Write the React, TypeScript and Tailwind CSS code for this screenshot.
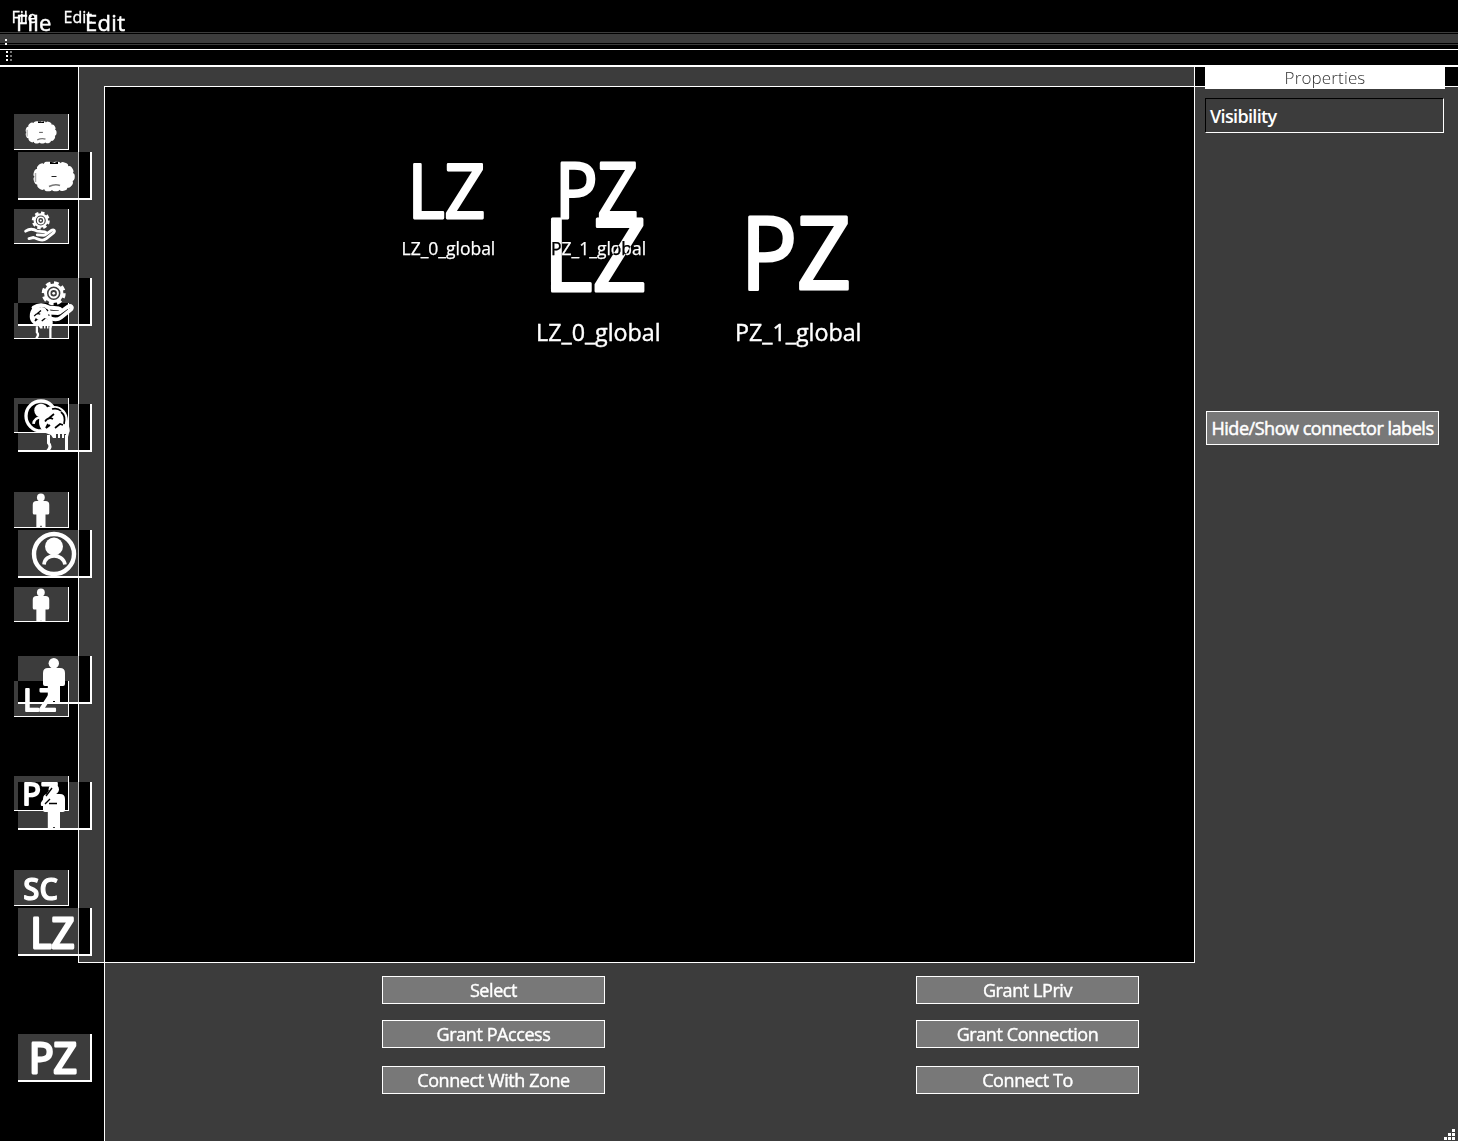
import React from "react";

type Box = { x: number; y: number; w: number; h: number };

const METRICS: Record<string, { visible: number; left: number }> = {
  LZ: { visible: 0.87, left: 0.09 },
  PZ: { visible: 0.88, left: 0.083 },
  SC: { visible: 0.93, left: 0.04 },
};

function Initials({ text, box, stroke, weight = 400 }: { text: string; box: Box; stroke: number; weight?: number }) {
  const m = METRICS[text];
  const advance = (box.w - stroke) / m.visible;
  return (
    <text
      x={box.x + stroke / 2 - m.left * advance}
      y={box.y + box.h - stroke / 2}
      textLength={advance}
      lengthAdjust="spacingAndGlyphs"
      fontFamily="Open Sans, sans-serif"
      fontWeight={weight}
      fontSize={(box.h - stroke) / 0.714}
      fill="white"
      stroke="white"
      strokeWidth={stroke}
      strokeLinejoin="round"
    >
      {text}
    </text>
  );
}

function Glyph({ kind }: { kind: string }) {
  switch (kind) {
    case "cloud":
      return (
        <g>
          <rect x="4.500" y="11.500" width="39" height="26" rx="13" fill="white" />
          <rect x="6" y="12.500" width="36" height="24" rx="12" fill="none" stroke="white" strokeWidth="5.500" strokeLinecap="round" strokeDasharray="2.500 5" />
          <path d="M20 9.500l4 1.500 4-1.500v2.500h-8z" fill="black" />
          <path d="M21.500 24.500h5" stroke="#222" strokeWidth="1" />
          <path d="M19 34.500q6-3 11-1" fill="none" stroke="#777" strokeWidth="1.6" />
          <path d="M5.500 21v9" stroke="#aaa" strokeWidth="1.5" />
        </g>
      );
    case "service":
      return (
        <g fill="none" stroke="white">
          <circle cx="23.700" cy="15.300" r="8.200" strokeWidth="3" />
          <circle cx="23.700" cy="15.300" r="10.200" strokeWidth="3.600" strokeDasharray="4.600 3.411" />
          <circle cx="23.700" cy="15.300" r="4.200" strokeWidth="2" />
          <circle cx="23.700" cy="15.300" r="1.400" fill="white" strokeWidth="0" />
          <path
            d="M3.500 29.500C8 26.500 14 26.500 19 29.500L29 30.500C32 31 31 35 28 35L19 34.500M31 33.500L38 28.500C41 27 43 29 41 31.500L31 39.500C28 42 25 42 21 40.500L14 38L8 39.500"
            strokeWidth="3.800"
            strokeLinecap="round"
            strokeLinejoin="round"
          />
        </g>
      );
    case "head":
      return (
        <g>
          <path d="M18.500 31v8c2 2 2 5-1 8M36.500 31v16" fill="none" stroke="white" strokeWidth="3" />
          <path d="M9 18C9 8 15 2 24 2s14 7 14 15c0 4 3 9 1 12l-1 4h-2v-3h-2v4h-2v-4h-2v4h-2v-4h-2v4h-3l-2-3C13 29 9 24 9 18z" fill="white" />
          <path d="M15 17.500c2-3 5-4 8-2.500M18 20l-2 4 4-3M24 10l-6 5M25 24l5-4 3 1M31 8c4 3 4 8 3 12M22 5c4-1 7 0 9 2" fill="none" stroke="black" strokeWidth="1.700" />
        </g>
      );
    case "account":
      return (
        <g>
          <circle cx="24" cy="24" r="20" fill="none" stroke="white" strokeWidth="4.400" />
          <circle cx="24" cy="16.500" r="9" fill="white" />
          <path d="M14 34.500c1-11.500 19-11.500 21 0" fill="none" stroke="white" strokeWidth="3.600" />
        </g>
      );
    case "person":
      return (
        <g fill="white">
          <circle cx="23.800" cy="7.200" r="5.200" />
          <path d="M18 12h12q5 0 5 5v11q0 2-2 2h-3v16.500h-5v-1.500h-2V46.500h-5.200V30H15q-2 0-2-2V17q0-5 5-5z" />
        </g>
      );
    case "LZ":
      return <Initials text="LZ" box={{ x: 3, y: 8, w: 41, h: 33 }} stroke={2.8} weight={500} />;
    case "PZ":
      return <Initials text="PZ" box={{ x: 1.500, y: 7, w: 45, h: 33 }} stroke={2.8} weight={500} />;
    default:
      return <Initials text="SC" box={{ x: 1.500, y: 11, w: 44.500, h: 30 }} stroke={1.6} weight={600} />;
  }
}

const SMALL_TOOLS = ["cloud", "service", "head", "account", "person", "person", "LZ", "PZ", "SC"];
const LARGE_TOOLS = ["cloud", "service", "head", "account", "person", "person", "LZ", "PZ"];

function ToolColumns() {
  return (
    <>
      <div className="absolute left-[14px] top-[114.300px] flex flex-col gap-[59px]">
        {SMALL_TOOLS.map((t, i) => (
          <div key={i} className="h-[35.500px] w-[55px] bg-[#3c3c3c] mix-blend-difference" />
        ))}
      </div>
      <div className="absolute left-[18px] top-[152px] flex flex-col gap-[78px]">
        {LARGE_TOOLS.map((t, i) => (
          <div key={i} className="h-[48px] w-[74px] bg-[#3c3c3c] mix-blend-difference" />
        ))}
      </div>
      <div className="absolute left-[14px] top-[114.300px] flex flex-col gap-[59px]">
        {SMALL_TOOLS.map((t, i) => (
          <div key={i} className="h-[35.500px] w-[55px] border-b border-r border-white pl-[8.500px]">
            <svg viewBox="0 0 48 48" className="block size-9 overflow-visible">
              <Glyph kind={t} />
            </svg>
          </div>
        ))}
      </div>
      <div className="absolute left-[18px] top-[152px] flex flex-col gap-[78px]">
        {LARGE_TOOLS.map((t, i) => (
          <div key={i} className="h-[48px] w-[74px] border-b-2 border-r-2 border-white pl-3">
            <svg viewBox="0 0 48 48" className="block size-12 overflow-visible">
              <Glyph kind={t} />
              {i === 5 && <path d="M22 6L16 14M20 17l-5 5M19 21.500h8" stroke="black" strokeWidth="1.400" fill="none" />}
            </svg>
          </div>
        ))}
      </div>
    </>
  );
}

function Header() {
  return (
    <header className="flex h-[67px] flex-col border-b-2 border-white bg-black">
      <div className="relative h-8">
        <span className="absolute left-[11.500px] top-[5px] text-[16px] leading-6 [-webkit-text-stroke:0.3px_white]">File</span>
        <span className="absolute left-[63.500px] top-[5px] text-[16px] leading-6 [-webkit-text-stroke:0.3px_white]">Edit</span>
        <span className="absolute left-[16px] top-[7px] text-[22px] leading-[30px] tracking-[0.2px] [-webkit-text-stroke:0.5px_white]">File</span>
        <span className="absolute left-[85px] top-[7px] text-[22px] leading-[30px] tracking-[0.3px] [-webkit-text-stroke:0.5px_white]">Edit</span>
      </div>
      <div className="h-px bg-[#3c3c3c]" />
      <div className="mt-px flex h-[9px] flex-col gap-[2px] bg-[#3c3c3c] pl-[5px] pt-[5px]">
        <i className="size-[2px] shrink-0 bg-white" />
        <i className="z-10 size-[2px] shrink-0 bg-white" />
      </div>
      <div className="mt-px h-px bg-[#3c3c3c]" />
      <div className="mt-1 h-px shrink-0 bg-white" />
      <div className="grid w-[14px] grid-cols-[4px_2px] gap-y-[2px] pl-[6px] pt-[1px]">
        {[0, 1, 2].map((i) => (
          <React.Fragment key={i}>
            <i className="size-[2px] bg-white" />
            <i className="size-[2px] bg-[#777]" />
          </React.Fragment>
        ))}
      </div>
    </header>
  );
}

function ActionButton({ label }: { label: string }) {
  return (
    <button className="flex h-7 w-[223px] items-center justify-center border border-white bg-[#787878] text-[18px] leading-none tracking-[-0.42px] [-webkit-text-stroke:0.4px_white]">
      {label}
    </button>
  );
}

function Canvas() {
  return (
    <div className="relative h-[877px] border-b border-r border-t border-white bg-black">
      <svg width="480" height="150" viewBox="400 150 480 150" className="absolute left-[295px] top-[63px] overflow-visible">
        <Initials text="LZ" box={{ x: 413, y: 162.500, w: 70.500, h: 57 }} stroke={2.8} />
        <Initials text="PZ" box={{ x: 560.500, y: 161.500, w: 76, h: 57.500 }} stroke={2.8} />
        <Initials text="LZ" box={{ x: 551, y: 217, w: 93, h: 75.500 }} stroke={3.200} />
        <Initials text="PZ" box={{ x: 748, y: 215.500, w: 100.500, h: 75.500 }} stroke={3.200} />
      </svg>
      <span className="absolute left-[296.500px] top-[149px] text-[17.500px] leading-6 [-webkit-text-stroke:0.25px_white]">LZ_0_global</span>
      <span className="absolute left-[446px] top-[149px] text-[17.500px] leading-6 mix-blend-difference [-webkit-text-stroke:0.25px_white]">PZ_1_global</span>
      <span className="absolute left-[431px] top-[229px] text-[23.300px] leading-8 tracking-[-0.02px] [-webkit-text-stroke:0.4px_white]">LZ_0_global</span>
      <span className="absolute left-[630px] top-[229px] text-[23.300px] leading-8 tracking-[-0.02px] [-webkit-text-stroke:0.4px_white]">PZ_1_global</span>
    </div>
  );
}

export default function App() {
  return (
    <div className="relative h-[1141px] w-[1458px] overflow-hidden bg-black font-['Open_Sans',sans-serif] text-white">
      <Header />
      <main className="flex h-[1074px]">
        <aside className="flex w-[105px] flex-col">
          <div className="flex h-[896px]">
            <div className="w-[78px]" />
            <div className="flex w-[27px] flex-col border-b border-l border-white bg-[#3c3c3c]">
              <div className="h-[19px]" />
              <div className="flex-1 border-r border-white" />
            </div>
          </div>
          <div className="flex-1 border-r border-white" />
        </aside>
        <section className="flex w-[1090px] flex-col bg-[#3c3c3c]">
          <div className="h-[19px] border-r border-white" />
          <Canvas />
          <div className="grid grid-cols-[534px_223px] pl-[277px] pt-[13px]">
            <div className="flex flex-col">
              <ActionButton label="Select" />
              <div className="h-4" />
              <ActionButton label="Grant PAccess" />
              <div className="h-[18px]" />
              <ActionButton label="Connect With Zone" />
            </div>
            <div className="flex flex-col">
              <ActionButton label="Grant LPriv" />
              <div className="h-4" />
              <ActionButton label="Grant Connection" />
              <div className="h-[18px]" />
              <ActionButton label="Connect To" />
            </div>
          </div>
        </section>
        <aside className="relative flex w-[263px] flex-col bg-[#3c3c3c]">
          <div className="flex h-5 shrink-0 items-start border-b border-white bg-black pl-[10px]">
            <h2 className="z-10 h-[22px] w-[240px] bg-white text-center text-[17px] font-light leading-[22px] tracking-[0.15px] text-[#333]">
              Properties
            </h2>
          </div>
          <div className="ml-[10px] mt-[11px] flex h-[35px] w-[239px] items-center border border-b-white border-l-black border-r-white border-t-black pl-[4px] pt-[2px] text-[18px] font-semibold tracking-[-0.65px]">
            Visibility
          </div>
          <button className="ml-[11px] mt-[278px] flex h-[34px] w-[233px] items-center justify-center whitespace-nowrap border border-white bg-[#787878] text-[18px] tracking-[-0.47px] [-webkit-text-stroke:0.5px_white]">
            Hide/Show connector labels
          </button>
          <div className="absolute bottom-[1px] right-[3px] grid grid-cols-3 gap-[1px]">
            {[0, 0, 1, 0, 1, 1, 1, 1, 1].map((on, i) => (
              <i key={i} className={on ? "size-[3px] bg-white" : "size-[3px]"} />
            ))}
          </div>
        </aside>
      </main>
      <ToolColumns />
    </div>
  );
}
